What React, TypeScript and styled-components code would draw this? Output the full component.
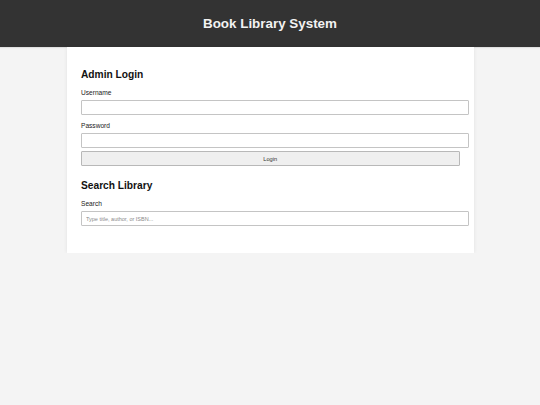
import styled, { createGlobalStyle } from 'styled-components'

const GlobalStyle = createGlobalStyle`
  html, body {
    margin: 0;
    padding: 0;
    background: #f4f4f4;
    font-family: "Liberation Sans", Arial, sans-serif;
  }
`

const Header = styled.header`
  height: 47px;
  background: #333333;
  color: #f2f2f2;
  display: flex;
  align-items: center;
  justify-content: center;
  box-shadow: 0 1px 1px rgba(0, 0, 0, 0.08);
`

const Title = styled.h1`
  margin: 0;
  font-size: 13.4px;
  font-weight: bold;
  line-height: 16px;
`

const Card = styled.main`
  width: 407px;
  margin: 0 auto;
  box-sizing: border-box;
  background: #ffffff;
  padding: 22px 14px 27px 14.5px;
  box-shadow: 0 0 4px rgba(0, 0, 0, 0.08);
  display: flex;
  flex-direction: column;
`

const Section = styled.section<{ $gap?: number }>`
  display: flex;
  flex-direction: column;
  margin-top: ${(p) => p.$gap ?? 0}px;
`

const Heading = styled.h2`
  margin: 0 0 7.5px;
  font-size: 10.2px;
  font-weight: bold;
  line-height: 12px;
  color: #111111;
`

const Label = styled.label<{ $top?: number }>`
  display: block;
  margin-top: ${(p) => p.$top ?? 0}px;
  margin-bottom: 3.5px;
  font-size: 6.6px;
  line-height: 8px;
  color: #222222;
`

const Input = styled.input`
  display: block;
  box-sizing: border-box;
  width: calc(100% + 9px);
  height: 15px;
  margin: 0;
  padding: 0 4px;
  border: 1px solid #c4c4c4;
  border-radius: 1px;
  background: #ffffff;
  font-family: inherit;
  font-size: 5.5px;
  outline: none;

  &::placeholder {
    color: #8a8a8a;
  }
`

const Button = styled.button`
  display: block;
  box-sizing: border-box;
  width: 100%;
  height: 15px;
  margin: 3px 0 0;
  padding: 0;
  border: 1px solid #b8b8b8;
  border-radius: 1px;
  background: #efefef;
  color: #333333;
  font-family: inherit;
  font-size: 5.7px;
  cursor: pointer;
`

export default function App() {
  return (
    <>
      <GlobalStyle />
      <Header>
        <Title>Book Library System</Title>
      </Header>
      <Card>
        <Section>
          <Heading>Admin Login</Heading>
          <Label htmlFor="username">Username</Label>
          <Input id="username" type="text" />
          <Label htmlFor="password" $top={6.5}>
            Password
          </Label>
          <Input id="password" type="password" />
          <Button type="button">Login</Button>
        </Section>
        <Section $gap={14}>
          <Heading>Search Library</Heading>
          <Label htmlFor="search">Search</Label>
          <Input id="search" type="text" placeholder="Type title, author, or ISBN..." />
        </Section>
      </Card>
    </>
  )
}
